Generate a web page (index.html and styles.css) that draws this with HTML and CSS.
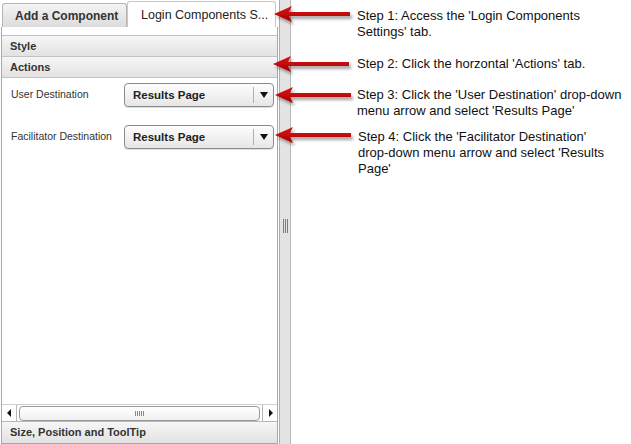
FILE: index.html
```html
<!DOCTYPE html>
<html lang="en">
<head>
  <meta charset="UTF-8" />
  <title>Login Components Settings</title>
  <link rel="stylesheet" href="styles.css">
</head>
<body>
  <div class="page">
    <div class="panel">
      <div class="tabs">
        <div class="tab">Add a Component</div>
        <div class="tab active">Login Components S...</div>
      </div>
      <div class="body">
        <div class="section-head">Style</div>
        <div class="section-head">Actions</div>
        <div class="content">
          <div class="field">
            <label>User Destination</label>
            <div class="select"><span>Results Page</span><i class="caret"></i></div>
          </div>
          <div class="field">
            <label>Facilitator Destination</label>
            <div class="select"><span>Results Page</span><i class="caret"></i></div>
          </div>
        </div>
        <div class="hscroll">
          <div class="sbtn left"></div>
          <div class="thumb"><span class="grip"></span></div>
          <div class="sbtn right"></div>
        </div>
        <div class="section-head last">Size, Position and ToolTip</div>
      </div>
    </div>
    <div class="splitter"><span class="grip-v"></span></div>
  </div>

  <!-- callouts -->
  <svg class="arrows" width="631" height="444">
    <defs>
      <linearGradient id="red" x1="0" y1="0" x2="0" y2="1">
        <stop offset="0" stop-color="#e01010"/>
        <stop offset="1" stop-color="#a80000"/>
      </linearGradient>
      <filter id="shadow" x="-10%" y="-50%" width="130%" height="250%">
        <feDropShadow dx="2" dy="3" stdDeviation="1.5" flood-color="#000" flood-opacity="0.35"/>
      </filter>
      <path id="arrow" d="M0 0 L18 -8 L15 -2 L76 -2 L76 2 L15 2 L18 8 Z"/>
    </defs>
    <use href="#arrow" x="274" y="14" fill="url(#red)" filter="url(#shadow)"/>
    <use href="#arrow" x="273" y="64" fill="url(#red)" filter="url(#shadow)"/>
    <use href="#arrow" x="275" y="95" fill="url(#red)" filter="url(#shadow)"/>
    <use href="#arrow" x="275" y="135" fill="url(#red)" filter="url(#shadow)"/>
  </svg>
  <div class="note n1">Step 1: Access the 'Login Components Settings' tab.</div>
  <div class="note n2">Step 2: Click the horzontal 'Actions' tab.</div>
  <div class="note n3">Step 3: Click the 'User Destination' drop-down menu arrow and select 'Results Page'</div>
  <div class="note n4">Step 4: Click the 'Facilitator Destination' drop-down menu arrow and select 'Results Page'</div>
</body>
</html>
```

FILE: styles.css
```css
* {
  margin: 0;
  padding: 0;
  box-sizing: border-box;
}

body {
  width: 631px;
  height: 444px;
  background: #fff;
  font-family: "Liberation Sans", Arial, sans-serif;
  position: relative;
  overflow: hidden;
}

.page {
  display: flex;
  height: 444px;
}

.panel {
  width: 279px;
  display: flex;
  flex-direction: column;
}

.tabs {
  display: flex;
  align-items: flex-end;
  height: 27px;
  padding-left: 2px;
}

.tab {
  height: 24px;
  width: 125px;
  border: 1px solid #b4b4b4;
  border-bottom: none;
  border-radius: 3px 3px 0 0;
  background: linear-gradient(#f4f4f4, #dcdcdc);
  font-size: 12px;
  font-weight: bold;
  color: #333;
  padding: 5px 0 0 12px;
  white-space: nowrap;
  overflow: hidden;
}

.tab.active {
  height: 26px;
  width: 149px;
  background: #fff;
  border-color: #c8c8c8;
  font-size: 12.5px;
  font-weight: normal;
  color: #222;
  padding: 6px 0 0 13px;
}

.body {
  flex: 1;
  display: flex;
  flex-direction: column;
  border-left: 1px solid #a8a8a8;
  border-right: 1px solid #a8a8a8;
  border-bottom: 1px solid #a8a8a8;
  margin: 0 1px;
  padding-top: 8px;
}

.section-head {
  height: 21px;
  border-top: 1px solid #c2c2c2;
  background: linear-gradient(#f6f6f6, #e2e2e2);
  font-size: 11px;
  font-weight: bold;
  color: #333;
  padding: 4px 0 0 8px;
}

.section-head.last {
  height: 22px;
  padding-top: 4px;
  border-top: 1px solid #b8b8b8;
}

.content {
  flex: 1;
  border-top: 1px solid #c2c2c2;
  padding: 5px 0 0 9px;
}

.field {
  display: flex;
  align-items: flex-start;
  height: 42px;
}

.field label {
  width: 113px;
  font-size: 10.5px;
  color: #333;
  padding-top: 5px;
}

.select {
  width: 150px;
  height: 24px;
  border: 1px solid #8c8c8c;
  border-radius: 4px;
  background: linear-gradient(#fdfdfd, #e6e6e6);
  display: flex;
  align-items: center;
  font-size: 11.5px;
  font-weight: bold;
  color: #222;
  box-shadow: 0 1px 0 #ddd;
}

.select span {
  flex: 1;
  padding-left: 8px;
}

.caret {
  width: 20px;
  height: 16px;
  border-left: 1px solid #b0b0b0;
  position: relative;
}

.caret::after {
  content: "";
  position: absolute;
  left: 6px;
  top: 5px;
  border-left: 4px solid transparent;
  border-right: 4px solid transparent;
  border-top: 6px solid #111;
}

.hscroll {
  display: flex;
  height: 17px;
  align-items: center;
  border-top: 1px solid #d0d0d0;
}

.sbtn {
  width: 15px;
  height: 16px;
  position: relative;
}

.sbtn.left {
  border-right: 1px solid #b8b8b8;
}

.sbtn.right {
  border-left: 1px solid #b8b8b8;
}

.sbtn::after {
  content: "";
  position: absolute;
  top: 4px;
  border-top: 4px solid transparent;
  border-bottom: 4px solid transparent;
}

.sbtn.left::after {
  left: 5px;
  border-right: 4px solid #111;
}

.sbtn.right::after {
  left: 6px;
  border-left: 4px solid #111;
}

.thumb {
  flex: 1;
  height: 15px;
  margin: 0 2px;
  border: 1px solid #9a9a9a;
  border-radius: 4px;
  background: linear-gradient(#fff, #f0f0f0);
  display: flex;
  justify-content: center;
  align-items: center;
}

.grip {
  width: 9px;
  height: 5px;
  background: repeating-linear-gradient(90deg, #888 0 1px, transparent 1px 2px);
}

.splitter {
  width: 12px;
  background: #e3e3e3;
  border-left: 1px solid #adadad;
  border-right: 1px solid #b8b8b8;
  display: flex;
  justify-content: center;
  align-items: center;
}

.grip-v {
  width: 5px;
  height: 14px;
  margin-top: 8px;
  background: repeating-linear-gradient(90deg, #7a7a7a 0 1px, transparent 1px 2px);
}

.arrows {
  position: absolute;
  left: 0;
  top: 0;
  pointer-events: none;
}

.note {
  position: absolute;
  left: 357px;
  font-size: 13px;
  line-height: 16px;
  color: #111;
}

.n1 { top: 8px; width: 240px; }
.n2 { top: 56px; width: 270px; }
.n3 { top: 87px; width: 268px; }
.n4 { top: 129px; left: 358px; width: 252px; }
```
